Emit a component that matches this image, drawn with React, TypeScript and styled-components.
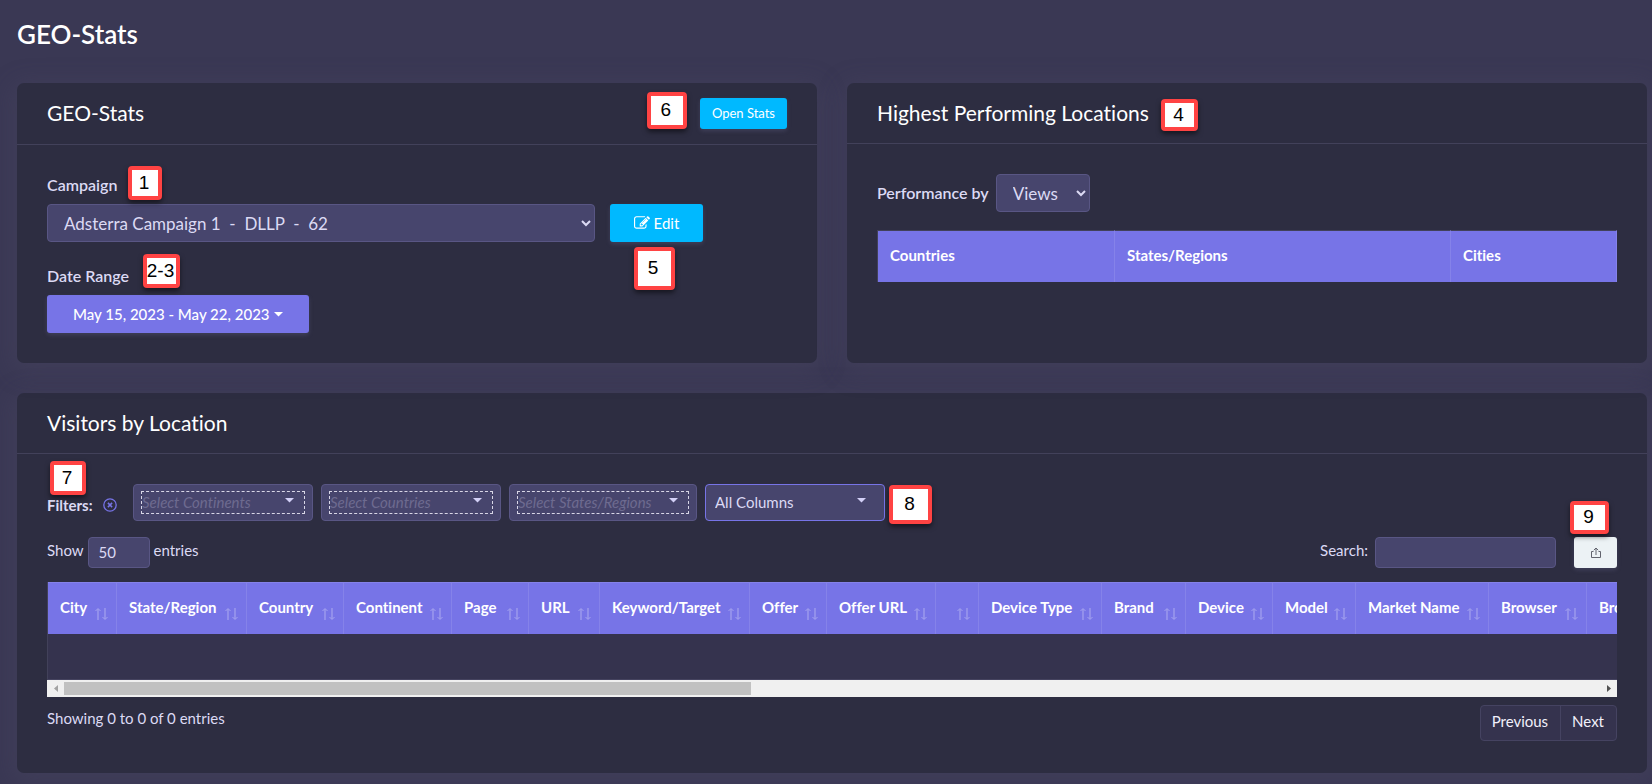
import React from 'react';
import styled, { createGlobalStyle, css } from 'styled-components';

const color = {
  page: '#3a3854',
  card: '#2d2d41',
  line: '#42415a',
  field: '#47456d',
  fieldLine: '#595684',
  row: '#35334e',
  purple: '#7774e7',
  cyan: '#00b9ff',
  text: '#dcdaf4',
  muted: '#6e6b90',
};

const GlobalStyle = createGlobalStyle`
  *, *::before, *::after { box-sizing: border-box; }
  body {
    margin: 0;
    background: ${color.page};
    color: ${color.text};
    font-family: Lato, 'Liberation Sans', sans-serif;
    font-size: 15px;
    line-height: 21px;
    font-variant-ligatures: none;
  }
  button, input, select { font: inherit; color: inherit; margin: 0; }
`;

const Page = styled.main`
  min-height: 100vh;
  padding: 18px 5px 11px 17px;
  overflow: hidden;
`;

const PageTitle = styled.h1`
  margin: 0 0 33px;
  font-size: 26px;
  line-height: 32px;
  font-weight: 600;
  color: #fff;
`;

const TopCards = styled.div`
  display: grid;
  grid-template-columns: 1fr 1fr;
  gap: 30px;
  margin-bottom: 30px;
`;

const Card = styled.section`
  min-width: 0;
  background: ${color.card};
  border-radius: 7px;
  box-shadow: 0 5px 25px 5px rgba(80, 76, 104, 0.3);
`;

const CardHeader = styled.header`
  display: flex;
  justify-content: space-between;
  padding: 15px 30px;
  border-bottom: 1px solid ${color.line};
`;

const CardTitle = styled.h2`
  margin: 0;
  font-size: 21px;
  line-height: 30px;
  font-weight: 400;
  color: #fff;
`;

const CardBody = styled.div`
  padding: 30px;
`;

const Anchor = styled.div`
  position: relative;
  display: inline-flex;
`;

const Callout = styled.span<{ $x: number; $y: number; $w: number; $h: number }>`
  position: absolute;
  z-index: 1;
  left: ${(p) => p.$x}px;
  top: ${(p) => p.$y}px;
  width: ${(p) => p.$w}px;
  height: ${(p) => p.$h}px;
  display: flex;
  align-items: center;
  justify-content: center;
  padding: 0 2px 1px 0;
  border: 4px solid #ff4343;
  border-radius: 4px;
  background: #fff;
  box-shadow: 0 3px 5px rgba(0, 0, 0, 0.5);
  color: #000;
  font-family: 'Liberation Sans', Arial, sans-serif;
  font-size: 19px;
  line-height: 20px;
  font-weight: 400;
  white-space: nowrap;
`;

const Button = styled.button<{ $tone: 'cyan' | 'purple' | 'light'; $small?: boolean }>`
  display: inline-flex;
  align-items: center;
  justify-content: center;
  gap: 4px;
  height: ${(p) => (p.$small ? 31 : 38)}px;
  padding: 0 ${(p) => (p.$small ? 12 : 24)}px;
  border: 0;
  border-radius: 3px;
  color: #fff;
  font-size: ${(p) => (p.$small ? 13 : 15)}px;
  box-shadow: 0 2px 4px rgba(110, 110, 150, 0.3);
  ${(p) => p.$tone === 'cyan' && css`background: ${color.cyan};`}
  ${(p) => p.$tone === 'purple' && css`background: ${color.purple}; padding: 0 26px; font-weight: 500;`}
  ${(p) => p.$tone === 'light' && css`background: #ecf2f5; color: #62646e; width: 43px;`}
`;

const Field = styled.div`
  & + & { margin-top: 24px; }
`;

const FieldRow = styled.div`
  display: flex;
  gap: 15px;
`;

const Label = styled.label`
  font-size: 16px;
  line-height: 20px;
  font-weight: 600;
`;

const FieldLabel = styled(Anchor)`
  display: flex;
  margin-bottom: 9px;
`;

const Select = styled.select<{ $wide?: boolean }>`
  height: 38px;
  padding: 0 12px;
  border: 1px solid ${color.fieldLine};
  border-radius: 4px;
  background-color: ${color.field};
  font-size: 17px;
  ${(p) => (p.$wide ? css`flex: 0 0 74%; min-width: 0;` : css`width: 94px;`)}
`;

const PerformanceRow = styled.div`
  display: flex;
  align-items: center;
  gap: 7px;
  margin-bottom: 18px;
`;

const Table = styled.table<{ $wide?: boolean }>`
  table-layout: fixed;
  width: ${(p) => (p.$wide ? '3436px' : '100%')};
  border-spacing: 0;
  border-left: 1px solid ${color.line};
`;

const Col = styled.col<{ $w: string }>`
  width: ${(p) => p.$w};
`;

const Th = styled.th<{ $grayTop?: boolean }>`
  height: 52px;
  padding: 0 8px 2px 12px;
  border-top: 1px solid ${(p) => (p.$grayTop ? color.line : '#8582e9')};
  border-right: 1px solid #8582e9;
  background: ${color.purple};
  color: #fff;
  font-weight: 700;
  text-align: left;
  white-space: nowrap;
`;

const SortButton = styled.button`
  display: flex;
  align-items: center;
  justify-content: space-between;
  width: 100%;
  height: 49px;
  padding: 0;
  border: 0;
  background: none;
  font-weight: 700;
  text-align: left;
  & > svg { flex: none; margin-top: 12px; color: #a5a2ef; }
`;

const EmptyCell = styled.td`
  height: 46px;
  padding: 0;
  background: ${color.row};
  border-bottom: 1px solid #45435f;
`;

const TableWindow = styled.div`
  overflow: hidden;
`;

const ScrollBar = styled.div`
  display: flex;
  align-items: center;
  height: 17px;
  background: #f0f0f0;
`;

const ScrollArrow = styled.button<{ $dim?: boolean }>`
  display: flex;
  align-items: center;
  justify-content: center;
  flex: 0 0 17px;
  height: 17px;
  padding: 0;
  border: 0;
  background: none;
  color: ${(p) => (p.$dim ? '#a3a3a3' : '#505050')};
`;

const ScrollTrack = styled.div`
  flex: 1;
`;

const ScrollThumb = styled.div`
  width: 44.7%;
  height: 13px;
  background: #c1c1c1;
`;

const FilterRow = styled.div`
  position: relative;
  display: flex;
  gap: 8px;
  margin-bottom: 16px;
`;

const FilterLabel = styled.div`
  display: flex;
  align-items: center;
  gap: 10px;
  width: 78px;
  padding-top: 5px;
  font-weight: 700;
`;

const ClearButton = styled.button`
  display: flex;
  padding: 0;
  border: 0;
  background: none;
  color: ${color.purple};
`;

const FilterBox = styled.div<{ $active?: boolean; $wide?: boolean }>`
  position: relative;
  display: flex;
  width: ${(p) => (p.$wide ? 188 : 180)}px;
  height: 37px;
  padding: 6px 7px;
  border: 1px solid ${(p) => (p.$active ? color.purple : color.fieldLine)};
  border-radius: 4px;
  background: ${color.field};
  & > svg { position: absolute; right: 18px; top: 13px; color: #d3d0f7; pointer-events: none; }
`;

const FilterSelect = styled.select<{ $placeholder?: boolean }>`
  appearance: none;
  width: 100%;
  padding: 0 1px 2px;
  border: 1px solid transparent;
  background: none;
  ${(p) => p.$placeholder && css`
    padding: 0 0 2px;
    border: 1px dashed #d8d6e6;
    color: ${color.muted};
    font-style: italic;
  `}
`;

const ToolRow = styled.div`
  display: flex;
  justify-content: space-between;
  margin-bottom: 14px;
`;

const ToolGroup = styled.div<{ $gap: number }>`
  display: flex;
  align-items: center;
  gap: ${(p) => p.$gap}px;
`;

const ToolLabel = styled.label`
  padding-bottom: 4px;
`;

const Input = styled.input<{ $w: number }>`
  width: ${(p) => p.$w}px;
  height: 31px;
  padding: 0 10px 1px;
  border: 1px solid ${color.fieldLine};
  border-radius: 4px;
  background: ${color.field};
`;

const SearchGroup = styled(ToolGroup)`
  margin-right: 11px;
`;

const TableFooter = styled.footer`
  display: flex;
  justify-content: space-between;
  padding: 8px 0 2px;
`;

const Info = styled.p`
  margin: 3px 0 0;
`;

const Pager = styled.nav`
  display: flex;
  height: 36px;
  border: 1px solid #454361;
  border-radius: 4px;
  background: ${color.row};
`;

const PageButton = styled.button`
  padding: 0 12px 3px 11px;
  border: 0;
  background: none;
  color: #f1f0fb;
  & + & { border-left: 1px solid #454361; }
`;

const Caret = () => (
  <svg width="9" height="5" viewBox="0 0 9 5" aria-hidden="true">
    <path d="M0 0h9L4.500 4.500z" fill="currentColor" />
  </svg>
);

const EditIcon = () => (
  <svg width="16" height="16" viewBox="0 0 1792 1792" fill="currentColor" aria-hidden="true">
    <path d="M888 1184l116-116-152-152-116 116v56h96v96h56zm440-720q-16-16-33 1l-350 350q-17 17-1 33t33-1l350-350q17-17 1-33zm80 594v190q0 119-84.500 203.500t-203.500 84.500h-832q-119 0-203.500-84.500t-84.500-203.500v-832q0-119 84.500-203.500t203.500-84.500h832q63 0 117 25 15 7 18 23 3 17-9 29l-49 49q-14 14-32 8-23-6-45-6h-832q-66 0-113 47t-47 113v832q0 66 47 113t113 47h832q66 0 113-47t47-113v-126q0-13 9-22l64-64q15-15 35-7t20 29zm-96-738l288 288-672 672h-288v-288zm444 132l-92 92-288-288 92-92q28-28 68-28t68 28l152 152q28 28 28 68t-28 68z" />
  </svg>
);

const ClearIcon = () => (
  <svg width="14" height="14" viewBox="0 0 14 14" fill="none" stroke="currentColor" strokeWidth="1.3" aria-hidden="true">
    <circle cx="7" cy="7" r="6.200" />
    <path d="M4.900 4.900l4.200 4.200M9.100 4.900L4.900 9.100" strokeWidth="1.500" />
  </svg>
);

const ExportIcon = () => (
  <svg width="10" height="11" viewBox="0 0 10 11" fill="none" stroke="currentColor" aria-hidden="true">
    <path d="M2.500 4.500h-2v6h9v-6h-2M5 8V1M2.800 3.200L5 1l2.200 2.200" />
  </svg>
);

const SortIcon = () => (
  <svg width="13" height="12" viewBox="0 0 13 12" fill="none" stroke="currentColor" aria-hidden="true">
    <path d="M3 12V1M10 0v11" strokeWidth="1.200" />
    <path d="M0.500 3L3 0.500L5.500 3M7.500 9L10 11.500L12.500 9" />
  </svg>
);

const ArrowIcon = ({ left }: { left?: boolean }) => (
  <svg width="4" height="7" viewBox="0 0 4 7" aria-hidden="true">
    <path d={left ? 'M4 0v7L0 3.500z' : 'M0 0v7L4 3.500z'} fill="currentColor" />
  </svg>
);

const columns: [string, number][] = [
  ['City', 69], ['State/Region', 130], ['Country', 97], ['Continent', 108],
  ['Page', 77], ['URL', 71], ['Keyword/Target', 150], ['Offer', 77],
  ['Offer URL', 109], ['', 43], ['Device Type', 123], ['Brand', 84],
  ['Device', 87], ['Model', 83], ['Market Name', 133], ['Browser', 98],
  ['Browser Version', 1896],
];

const filters = ['Continents', 'Countries', 'States/Regions'];

export default function App() {
  return (
    <>
      <GlobalStyle />
      <Page>
        <PageTitle>GEO-Stats</PageTitle>
        <TopCards>
          <Card>
            <CardHeader>
              <CardTitle>GEO-Stats</CardTitle>
              <Anchor>
                <Callout $x={-53} $y={-6} $w={40} $h={37}>6</Callout>
                <Button $tone="cyan" $small>Open Stats</Button>
              </Anchor>
            </CardHeader>
            <CardBody>
              <Field>
                <FieldLabel>
                  <Label htmlFor="campaign">Campaign</Label>
                  <Callout $x={81} $y={-9} $w={34} $h={34}>1</Callout>
                </FieldLabel>
                <FieldRow>
                  <Select id="campaign" $wide>
                    <option>{'Adsterra Campaign 1\u00a0 -\u00a0 DLLP\u00a0 -\u00a0 62'}</option>
                  </Select>
                  <Anchor>
                    <Button $tone="cyan"><EditIcon />Edit</Button>
                    <Callout $x={24} $y={43} $w={41} $h={43}>5</Callout>
                  </Anchor>
                </FieldRow>
              </Field>
              <Field>
                <FieldLabel>
                  <Label htmlFor="range">Date Range</Label>
                  <Callout $x={96} $y={-12} $w={37} $h={34}>2-3</Callout>
                </FieldLabel>
                <Button id="range" $tone="purple">May 15, 2023 - May 22, 2023 <Caret /></Button>
              </Field>
            </CardBody>
          </Card>

          <Card>
            <CardHeader>
              <Anchor>
                <CardTitle>Highest Performing Locations</CardTitle>
                <Callout $x={284} $y={1} $w={37} $h={32}>4</Callout>
              </Anchor>
            </CardHeader>
            <CardBody>
              <PerformanceRow>
                <Label htmlFor="metric">Performance by</Label>
                <Select id="metric"><option>Views</option></Select>
              </PerformanceRow>
              <Table>
                <colgroup>
                  <Col $w="237px" /><Col $w="auto" /><Col $w="166px" />
                </colgroup>
                <thead>
                  <tr>
                    <Th $grayTop>Countries</Th>
                    <Th $grayTop>States/Regions</Th>
                    <Th $grayTop>Cities</Th>
                  </tr>
                </thead>
              </Table>
            </CardBody>
          </Card>
        </TopCards>

        <Card>
          <CardHeader><CardTitle>Visitors by Location</CardTitle></CardHeader>
          <CardBody>
            <FilterRow>
              <Callout $x={3} $y={-23} $w={36} $h={34}>7</Callout>
              <FilterLabel>
                Filters:
                <ClearButton aria-label="Clear filters"><ClearIcon /></ClearButton>
              </FilterLabel>
              {filters.map((name) => (
                <FilterBox key={name} $wide={name === 'States/Regions'}>
                  <FilterSelect aria-label={name} $placeholder>
                    <option>Select {name}</option>
                  </FilterSelect>
                  <Caret />
                </FilterBox>
              ))}
              <FilterBox $active>
                <FilterSelect aria-label="Columns"><option>All Columns</option></FilterSelect>
                <Caret />
                <Callout $x={183} $y={0} $w={43} $h={39}>8</Callout>
              </FilterBox>
            </FilterRow>

            <ToolRow>
              <ToolGroup $gap={4}>
                <ToolLabel htmlFor="entries">Show</ToolLabel>
                <Input id="entries" $w={62} defaultValue="50" />
                <ToolLabel htmlFor="entries">entries</ToolLabel>
              </ToolGroup>
              <ToolGroup $gap={7}>
                <SearchGroup $gap={7}>
                  <ToolLabel htmlFor="search">Search:</ToolLabel>
                  <Input id="search" $w={181} />
                </SearchGroup>
                <Anchor>
                  <Button $tone="light" $small aria-label="Export"><ExportIcon /></Button>
                  <Callout $x={-4} $y={-36} $w={39} $h={33}>9</Callout>
                </Anchor>
              </ToolGroup>
            </ToolRow>

            <TableWindow>
              <Table $wide>
                <colgroup>
                  {columns.map(([name, w]) => <Col key={name} $w={`${w}px`} />)}
                </colgroup>
                <thead>
                  <tr>
                    {columns.map(([name]) => (
                      <Th key={name}>
                        <SortButton aria-label={name || 'Sort'}>
                          <span>{name}</span>
                          <SortIcon />
                        </SortButton>
                      </Th>
                    ))}
                  </tr>
                </thead>
                <tbody>
                  <tr><EmptyCell colSpan={columns.length} /></tr>
                </tbody>
              </Table>
            </TableWindow>
            <ScrollBar>
              <ScrollArrow $dim aria-label="Scroll left"><ArrowIcon left /></ScrollArrow>
              <ScrollTrack><ScrollThumb /></ScrollTrack>
              <ScrollArrow aria-label="Scroll right"><ArrowIcon /></ScrollArrow>
            </ScrollBar>

            <TableFooter>
              <Info>Showing 0 to 0 of 0 entries</Info>
              <Pager aria-label="Table pages">
                <PageButton>Previous</PageButton>
                <PageButton>Next</PageButton>
              </Pager>
            </TableFooter>
          </CardBody>
        </Card>
      </Page>
    </>
  );
}
